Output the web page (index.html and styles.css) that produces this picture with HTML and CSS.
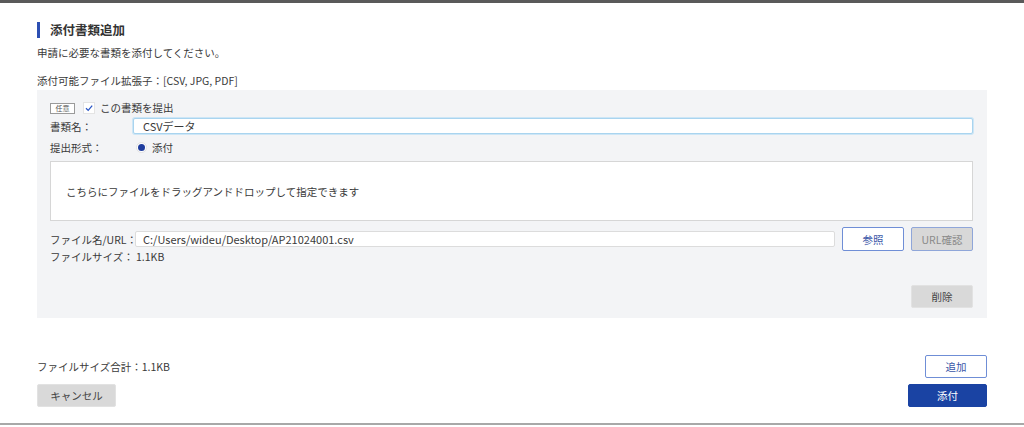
FILE: index.html
```html
<!DOCTYPE html>
<html lang="ja">
<head>
<meta charset="utf-8">
<link rel="stylesheet" href="styles.css">
</head>
<body>
<div class="topbar"></div>
<main class="page">
  <h1 class="title">添付書類追加</h1>
  <p class="lead">申請に必要な書類を添付してください。</p>
  <p class="ext">添付可能ファイル拡張子：[CSV, JPG, PDF]</p>

  <section class="panel">
    <div class="row-check">
      <span class="badge">任意</span>
      <span class="check">
        <svg viewBox="0 0 10 10" width="10" height="10"><path d="M2 5.2 L4.2 7.4 L8.2 2.6" fill="none" stroke="#2a56c6" stroke-width="1.3"/></svg>
      </span>
      <span class="check-label">この書類を提出</span>
    </div>
    <div class="row-name">
      <span class="label">書類名：</span>
      <div class="name-input">CSVデータ</div>
    </div>
    <div class="row-type">
      <span class="label">提出形式：</span>
      <span class="radio"><span class="dot"></span></span>
      <span class="radio-label">添付</span>
    </div>
    <div class="drop">こちらにファイルをドラッグアンドドロップして指定できます</div>
    <div class="row-file">
      <span class="label-file">ファイル名/URL：</span>
      <div class="file-input">C:/Users/wideu/Desktop/AP21024001.csv</div>
      <button class="btn btn-outline">参照</button>
      <button class="btn btn-disabled">URL確認</button>
    </div>
    <div class="row-size">ファイルサイズ：&nbsp;1.1KB</div>
    <div class="row-delete">
      <button class="btn btn-gray">削除</button>
    </div>
  </section>

  <div class="row-total">
    <span class="total">ファイルサイズ合計：1.1KB</span>
    <button class="btn btn-outline btn-add">追加</button>
  </div>
  <div class="row-actions">
    <button class="btn btn-gray btn-cancel">キャンセル</button>
    <button class="btn btn-primary">添付</button>
  </div>
</main>
<div class="bottomline"></div>
</body>
</html>
```

FILE: styles.css
```css
* { box-sizing: border-box; }
html, body { margin: 0; padding: 0; }
body {
  width: 1024px;
  height: 427px;
  overflow: hidden;
  background: #fff;
  font-family: "Noto Sans CJK JP", "Noto Sans", sans-serif;
  font-size: 10.5px;
  color: #3a3a3a;
}
.topbar { height: 3px; background: #5a5a5a; }
.page { padding: 0 37px; }
.title {
  margin: 19px 0 0 0;
  height: 16px;
  line-height: 16px;
  font-size: 12.5px;
  font-weight: bold;
  color: #333;
  border-left: 3px solid #2d4fb3;
  padding-left: 10px;
}
.lead { margin: 7px 0 0 0; line-height: 16px; }
.ext { margin: 12px 0 0 0; line-height: 16px; }
.panel {
  margin-top: 1px;
  height: 228px;
  background: #f3f4f6;
  padding: 11px 14px 0 13px;
}
.row-check { display: flex; align-items: center; height: 14px; }
.badge {
  display: inline-block;
  border: 1px solid #9a9a9a;
  background: #fff;
  font-size: 7px;
  line-height: 9px;
  height: 11px;
  width: 25px;
  text-align: center;
  color: #555;
}
.check {
  margin-left: 8px;
  width: 12px; height: 12px;
  background: #fff;
  border: 1px solid #e4e4e4;
  display: flex; align-items: center; justify-content: center;
}
.check-label { margin-left: 5px; line-height: 14px; }
.row-name { display: flex; align-items: center; margin-top: 3px; height: 16px; }
.label { width: 83px; flex: none; white-space: nowrap; }
.name-input {
  flex: 1;
  height: 16px;
  line-height: 14px;
  border: 1px solid #a9d4ef;
  border-radius: 2px;
  background: #fff;
  padding-left: 9px;
  font-size: 11px;
  box-shadow: 0 0 0 1px #cde6f6;
}
.row-type { display: flex; align-items: center; margin-top: 5px; height: 16px; }
.row-type .label { width: 86px; }
.radio {
  width: 11px; height: 11px; border-radius: 50%;
  background: #fff; border: 1px solid #e2e2e2;
  display: flex; align-items: center; justify-content: center;
}
.dot { width: 7px; height: 7px; border-radius: 50%; background: #1f3d9e; }
.radio-label { margin-left: 5px; }
.drop {
  margin-top: 6px;
  height: 60px;
  background: #fff;
  border: 1px solid #d6d6d6;
  display: flex;
  align-items: center;
  padding-left: 15px;
}
.row-file { display: flex; align-items: center; margin-top: 6px; height: 24px; }
.label-file { width: 85px; flex: none; white-space: nowrap; }
.file-input {
  width: 701px;
  height: 16px;
  line-height: 14px;
  border: 1px solid #dcdcdc;
  border-radius: 2px;
  background: #fff;
  padding-left: 7px;
  font-size: 11px;
}
.btn {
  font-family: inherit;
  font-size: 10.5px;
  height: 24px;
  width: 62px;
  border-radius: 2px;
  padding: 0;
  cursor: pointer;
}
.btn-outline { background: #fff; border: 1px solid #6f8ed6; color: #3b57a8; }
.row-file .btn-outline { margin-left: 7px; }
.btn-disabled { margin-left: 7px; background: #d8d8d8; border: 1px solid #8fa6d9; color: #8a8a8a; width: 62px; }
.row-size { margin-top: -2px; line-height: 16px; height: 16px; white-space: nowrap; }
.row-delete { display: flex; justify-content: flex-end; margin-top: 20px; }
.btn-gray { background: #d9d9d9; border: 1px solid #e2e2e2; color: #444; height: 23px; }
.row-total {
  display: flex; justify-content: space-between; align-items: center;
  margin-top: 37px; height: 23px;
}
.btn-add { height: 23px; }
.row-actions {
  display: flex; justify-content: space-between; align-items: center;
  margin-top: 6px;
}
.btn-cancel { width: 79px; height: 23px; }
.btn-primary { width: 79px; height: 23px; background: #1a43a3; border: 1px solid #1a43a3; color: #fff; }
.bottomline { position: absolute; top: 423px; left: 0; width: 1024px; height: 2px; background: #a8a8a8; }
```
